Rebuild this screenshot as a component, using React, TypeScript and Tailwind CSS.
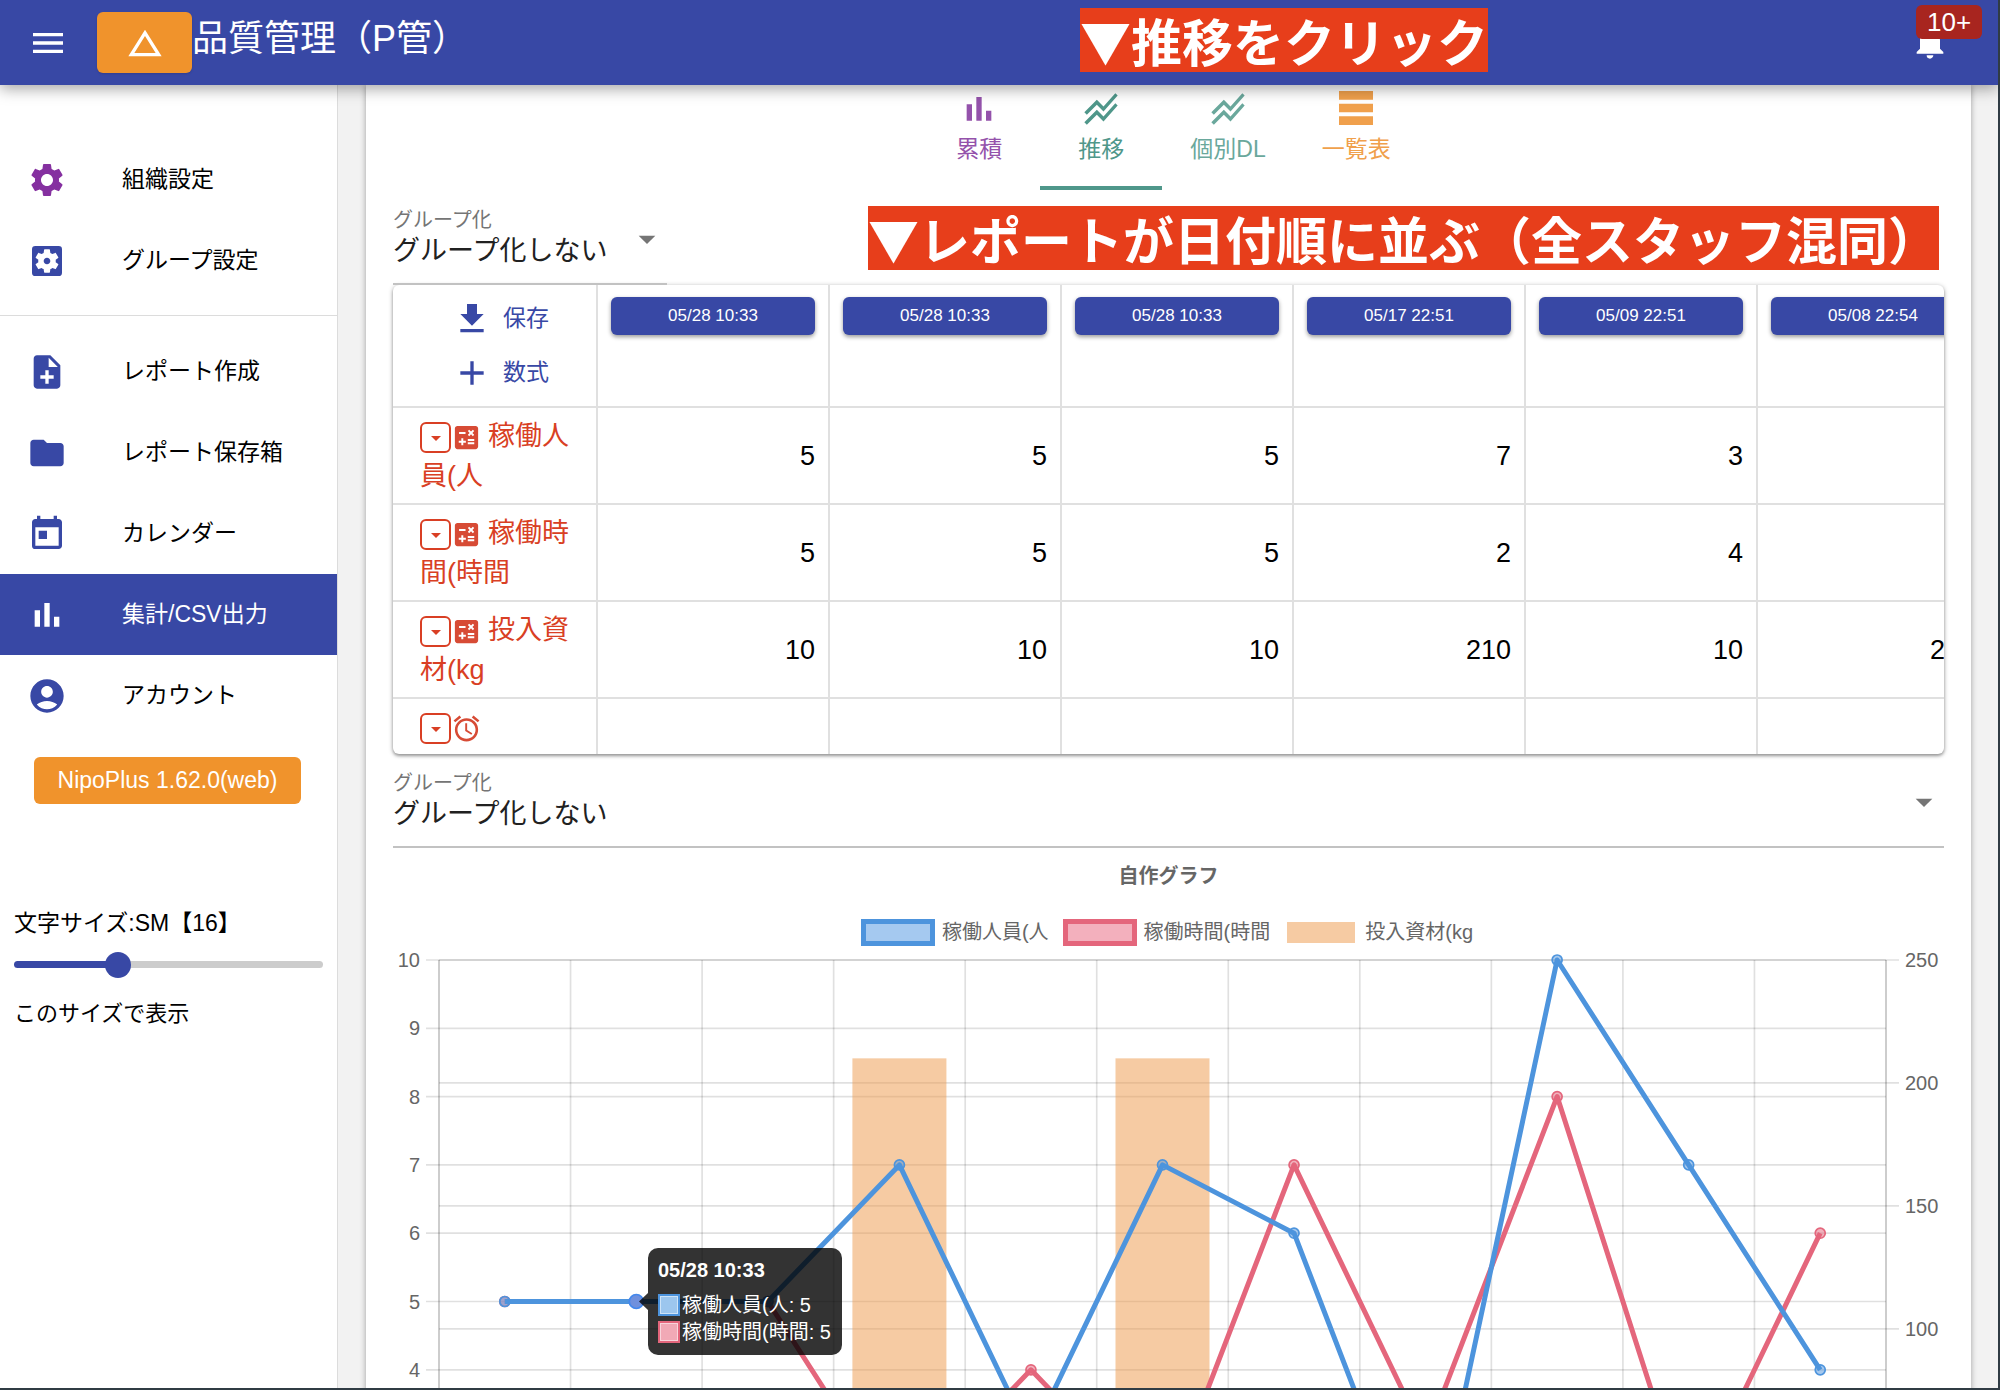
import { useState } from 'react';
import type { ComponentType } from 'react';
import {
  MdAccountCircle,
  MdAdd,
  MdAlarm,
  MdArrowDropDown,
  MdCalculate,
  MdChangeHistory,
  MdFolder,
  MdGetApp,
  MdMenu,
  MdNoteAdd,
  MdNotifications,
  MdSettings,
  MdSettingsApplications,
  MdStackedLineChart,
  MdToday,
} from 'react-icons/md';

type IconProps = { className?: string };
type NavItem = { label: string; icon: ComponentType<IconProps>; color?: string; active?: boolean };

function BarsIcon({ className }: IconProps) {
  return (
    <svg viewBox="0 0 24 24" fill="currentColor" className={className}>
      <path d="M4.600 9.200h3.200V19H4.600zM10.400 4.800h3.200V19h-3.200zM16.200 13h3.200v6h-3.200z" />
    </svg>
  );
}

function RowsIcon({ className }: IconProps) {
  return (
    <svg viewBox="0 0 24 24" fill="currentColor" className={className}>
      <path d="M1.800 1.200h20.400v5.200H1.800zM1.800 8.800h20.400V14H1.800zM1.800 16.400h20.400v5.200H1.800z" />
    </svg>
  );
}

const settingsNav: NavItem[] = [
  { label: '組織設定', icon: MdSettings, color: 'text-[#8530a0]' },
  { label: 'グループ設定', icon: MdSettingsApplications },
];

const reportNav: NavItem[] = [
  { label: 'レポート作成', icon: MdNoteAdd },
  { label: 'レポート保存箱', icon: MdFolder },
  { label: 'カレンダー', icon: MdToday },
  { label: '集計/CSV出力', icon: BarsIcon, active: true },
  { label: 'アカウント', icon: MdAccountCircle },
];

const tabs = [
  { label: '累積', icon: BarsIcon, color: 'text-[#9452ab]' },
  { label: '推移', icon: MdStackedLineChart, color: 'text-[#4f978a]', active: true },
  { label: '個別DL', icon: MdStackedLineChart, color: 'text-[#6aa89c]' },
  { label: '一覧表', icon: RowsIcon, color: 'text-[#f0a04c]' },
];

const dates = ['05/28 10:33', '05/28 10:33', '05/28 10:33', '05/17 22:51', '05/09 22:51', '05/08 22:54'];

const rows = [
  { label: '稼働人員(人', icon: MdCalculate, values: [5, 5, 5, 7, 3, 7] },
  { label: '稼働時間(時間', icon: MdCalculate, values: [5, 5, 5, 2, 4, 2] },
  { label: '投入資材(kg', icon: MdCalculate, values: [10, 10, 10, 210, 10, 210] },
  { label: '', icon: MdAlarm, values: ['', '', '', '', '', ''] },
];

const people = [5, 5, 5, 7, 3, 7, 6, 1, 10, 7, 4];
const hours = [5, 5, 5, 2, 4, 2, 7, 3, 8, 2, 6];
const material = [10, 10, 10, 210, 10, 210, 10, 10, 10, 10, 10];

function NavLink({ item }: { item: NavItem }) {
  const Icon = item.icon;
  return (
    <a
      href="#"
      className={`flex h-[81px] items-center gap-[55px] pl-[27px] text-[23px] ${
        item.active ? 'bg-[#3848a5] text-white' : 'text-black'
      }`}
    >
      <Icon className={`size-10 shrink-0 ${item.active ? 'text-white' : item.color ?? 'text-[#3848a5]'}`} />
      {item.label}
    </a>
  );
}

function GroupSelect({ id, className }: { id: string; className: string }) {
  return (
    <div className={`relative h-[94px] shrink-0 border-b-2 border-[#c2c2c2] pt-4 ${className}`}>
      <label htmlFor={id} className="block text-[20px] leading-[26px] text-[#757575]">
        グループ化
      </label>
      <select id={id} className="block h-9 w-full appearance-none bg-transparent text-[27px] leading-9 text-[#212121]">
        <option>グループ化しない</option>
      </select>
      <MdArrowDropDown className="pointer-events-none absolute right-0 top-7 size-10 text-[#757575]" />
    </div>
  );
}

function Note({ text, className }: { text: string; className: string }) {
  return (
    <p
      className={`whitespace-nowrap bg-[#e73e1b] font-['Noto_Sans_CJK_JP',sans-serif] text-[51px] font-bold leading-[64px] text-white ${className}`}
    >
      {text}
    </p>
  );
}

function Header() {
  return (
    <header className="relative z-10 flex h-[85px] shrink-0 items-center bg-[#3848a5] pl-7 text-white shadow-[0_4px_14px_rgba(0,0,0,0.35)]">
      <button type="button" aria-label="メニュー">
        <MdMenu className="size-10" />
      </button>
      <button
        type="button"
        aria-label="レポート"
        className="ml-[29px] flex h-[61px] w-[95px] items-center justify-center rounded-md bg-[#f0932c] shadow"
      >
        <MdChangeHistory className="size-10" />
      </button>
      <h1 className="pb-2 text-[36px]">品質管理（P管）</h1>
      <Note text="▼推移をクリック" className="absolute right-[510px] top-2" />
      <button type="button" aria-label="通知" className="absolute right-12 top-[22px]">
        <MdNotifications className="size-10" />
        <span className="absolute -top-[17px] left-[6px] rounded-md bg-[#a8251f] px-[11px] text-[26px] leading-[34px]">
          10+
        </span>
      </button>
    </header>
  );
}

function Sidebar() {
  const [size, setSize] = useState(32);
  return (
    <aside className="w-[338px] shrink-0 border-r border-[#dcdcdc] bg-white pt-[54px]">
      <nav>
        {settingsNav.map((item) => (
          <NavLink key={item.label} item={item} />
        ))}
        <hr className="mb-[15px] mt-[14px] border-[#dcdcdc]" />
        {reportNav.map((item) => (
          <NavLink key={item.label} item={item} />
        ))}
      </nav>
      <button type="button" className="ml-[34px] mt-[21px] h-[47px] w-[267px] rounded-md bg-[#f0932c] text-[23px] text-white">
        NipoPlus 1.62.0(web)
      </button>
      <div className="mt-[103px] px-[14px]">
        <label htmlFor="font-size" className="block text-[23px] leading-8">
          文字サイズ:SM【16】
        </label>
        <input
          id="font-size"
          type="range"
          min={0}
          max={100}
          value={size}
          onChange={(e) => setSize(Number(e.target.value))}
          className="mt-[22px] block h-[7px] w-full appearance-none rounded-full bg-linear-to-r from-[#3848a5] from-33% to-[#cccccc] to-33% [&::-webkit-slider-thumb]:size-[26px] [&::-webkit-slider-thumb]:appearance-none [&::-webkit-slider-thumb]:rounded-full [&::-webkit-slider-thumb]:bg-[#3848a5]"
        />
        <p className="mt-[30px] text-[22px] leading-8">このサイズで表示</p>
      </div>
    </aside>
  );
}

function ReportTable() {
  return (
    <div className="overflow-hidden rounded-md shadow-[0_1px_5px_rgba(0,0,0,0.3),0_2px_3px_rgba(0,0,0,0.25)]">
      <table className="w-[1596px] table-fixed border-separate border-spacing-0 text-[27px]">
        <thead>
          <tr className="h-[123px]">
            <th className="w-[205px] border-b-2 border-r-2 border-[#e0e0e0] font-normal">
              <div className="flex flex-col items-center pl-3 text-[23px] text-[#3848a5]">
                <button type="button" className="flex h-[54px] items-center gap-[11px]">
                  <MdGetApp className="size-10" />
                  保存
                </button>
                <button type="button" className="flex h-[54px] items-center gap-[11px]">
                  <MdAdd className="size-10" />
                  数式
                </button>
              </div>
            </th>
            {dates.map((date, i) => (
              <th key={i} className="w-[232px] border-b-2 border-r-2 border-[#e0e0e0] px-[13px] pt-3 align-top">
                <button
                  type="button"
                  className="block h-[38px] w-full rounded-md bg-[#3848a5] text-[17px] font-medium text-white shadow-[0_2px_4px_rgba(0,0,0,0.4)]"
                >
                  {date}
                </button>
              </th>
            ))}
          </tr>
        </thead>
        <tbody>
          {rows.map((row, r) => {
            const Icon = row.icon;
            const line = r < rows.length - 1 ? 'border-b-2' : '';
            return (
              <tr key={r}>
                <th
                  className={`${line} border-r-2 border-[#e0e0e0] pb-[7px] pl-[27px] pr-[22px] pt-2 text-left font-normal leading-10 text-[#d93f24]`}
                >
                  <button
                    type="button"
                    aria-label="並べ替え"
                    className="inline-flex size-[31px] items-center justify-center rounded-md border-2 border-[#d93f24] align-middle"
                  >
                    <MdArrowDropDown className="size-6 shrink-0" />
                  </button>
                  <Icon className="mr-[6px] inline size-[31px] align-middle text-[#d74b35]" />
                  {row.label}
                </th>
                {row.values.map((value, i) => (
                  <td key={i} className={`${line} border-r-2 border-[#e0e0e0] pr-[13px] pt-[2px] text-right text-black`}>
                    {value}
                  </td>
                ))}
              </tr>
            );
          })}
        </tbody>
      </table>
    </div>
  );
}

const legend = [
  { label: '稼働人員(人', box: 'bg-[#a5c9f0] outline-[5px] outline-[#4d94dd] -outline-offset-2' },
  { label: '稼働時間(時間', box: 'bg-[#f3b0bd] outline-[5px] outline-[#e4667c] -outline-offset-2' },
  { label: '投入資材(kg', box: 'bg-[#f6cba3]' },
];

const LEFT = 46;
const RIGHT = 1493;
const TOP = 12;
const STEP = (RIGHT - LEFT) / 11;
const UNIT = 68.3;

const px = (i: number) => LEFT + STEP * (i + 0.5);
const py = (v: number) => TOP + (10 - v) * UNIT;
const pyRight = (v: number) => TOP + ((250 - v) / 250) * UNIT * 9;
const toPoints = (values: number[]) => values.map((v, i) => `${px(i)},${py(v)}`).join(' ');

function Chart() {
  return (
    <svg viewBox="0 0 1551 640" className="block w-full text-[20px]" role="img" aria-label="自作グラフ">
      {/* grid */}
      <g stroke="#000" strokeOpacity="0.12" strokeWidth="1.7">
        {[10, 9, 8, 7, 6, 5, 4, 3, 2, 1].map((v) => (
          <line key={v} x1={LEFT - 13} x2={RIGHT} y1={py(v)} y2={py(v)} />
        ))}
        {[250, 200, 150, 100, 50, 0].map((v) => (
          <line key={v} x1={LEFT} x2={RIGHT + 13} y1={pyRight(v)} y2={pyRight(v)} />
        ))}
        {Array.from({ length: 12 }, (_, i) => (
          <line key={i} x1={LEFT + STEP * i} x2={LEFT + STEP * i} y1={TOP} y2={py(1)} />
        ))}
        <line x1={LEFT} x2={LEFT} y1={TOP} y2={py(1)} />
        <line x1={RIGHT} x2={RIGHT} y1={TOP} y2={py(1)} />
      </g>

      {/* axis labels */}
      <g fill="#666">
        {[10, 9, 8, 7, 6, 5, 4, 3, 2, 1].map((v) => (
          <text key={v} x={LEFT - 19} y={py(v) + 7} textAnchor="end">
            {v}
          </text>
        ))}
        {[250, 200, 150, 100, 50, 0].map((v) => (
          <text key={v} x={RIGHT + 19} y={pyRight(v) + 7}>
            {v}
          </text>
        ))}
      </g>

      {material.map((v, i) => (
        <rect key={i} x={px(i) - 47} y={pyRight(v)} width="94" height={pyRight(0) - pyRight(v)} fill="#ee9848" fillOpacity="0.5" />
      ))}

      <polyline points={toPoints(hours)} fill="none" stroke="#e4667c" strokeWidth="5" strokeLinejoin="round" />
      {hours.map((v, i) => (
        <circle key={i} cx={px(i)} cy={py(v)} r="5" fill="#e4667c" fillOpacity="0.5" stroke="#e4667c" strokeWidth="1.7" />
      ))}
      <polyline points={toPoints(people)} fill="none" stroke="#4d94dd" strokeWidth="5" strokeLinejoin="round" />
      {people.map((v, i) => (
        <circle
          key={i}
          cx={px(i)}
          cy={py(v)}
          r={i === 1 ? 7 : 5}
          fill={i === 1 ? '#6f90dd' : '#4d94dd'}
          fillOpacity={i === 1 ? 1 : 0.5}
          stroke={i === 1 ? '#4488ec' : '#4d94dd'}
          strokeWidth="1.7"
        />
      ))}

      {/* tooltip */}
      <g fill="#fff">
        <path
          d="M265 300H439a10 10 0 0 1 10 10V397a10 10 0 0 1-10 10H265a10 10 0 0 1-10-10V362L246 353.500L255 345V310a10 10 0 0 1 10-10Z"
          fill="#000"
          fillOpacity="0.8"
        />
        <text x="265" y="329" fontWeight="bold">
          05/28 10:33
        </text>
        <rect x="266" y="347" width="20" height="20" fill="#9cc6ee" stroke="#4d94dd" strokeWidth="2" />
        <rect x="267.500" y="348.500" width="17" height="17" fill="none" stroke="#fff" strokeOpacity="0.5" />
        <text x="289" y="364">稼働人員(人: 5</text>
        <rect x="266" y="374" width="20" height="20" fill="#f1a9b6" stroke="#e4667c" strokeWidth="2" />
        <rect x="267.500" y="375.500" width="17" height="17" fill="none" stroke="#fff" strokeOpacity="0.5" />
        <text x="289" y="391">稼働時間(時間: 5</text>
      </g>
    </svg>
  );
}

export default function App() {
  return (
    <div className="flex h-screen flex-col overflow-hidden border-b-2 border-r-2 border-[#303c44] bg-white font-['Liberation_Sans','Noto_Sans_CJK_JP',sans-serif] text-black">
      <Header />
      <div className="flex min-h-0 flex-1">
        <Sidebar />
        <div className="min-w-0 flex-1 overflow-hidden bg-[#f2f2f2] pl-7 pr-[27px]">
          <main className="min-h-full bg-white px-[27px] shadow-[0_0_6px_rgba(0,0,0,0.35)]">
            <div className="flex h-[105px] justify-center" role="tablist">
              {tabs.map((tab) => {
                const Icon = tab.icon;
                return (
                  <button
                    key={tab.label}
                    type="button"
                    role="tab"
                    aria-selected={!!tab.active}
                    className={`flex min-w-[122px] flex-col items-center border-b-4 px-7 pt-1 text-[23px] leading-10 ${tab.color} ${
                      tab.active ? 'border-[#4f978a]' : 'border-transparent'
                    }`}
                  >
                    <Icon className="size-10" />
                    {tab.label}
                  </button>
                );
              })}
            </div>

            <div className="flex items-start justify-between pt-px">
              <GroupSelect id="group-table" className="w-[274px]" />
              <Note text="▼レポートが日付順に並ぶ（全スタッフ混同）" className="mr-[5px] mt-[15px]" />
            </div>

            <ReportTable />

            <GroupSelect id="group-chart" className="w-full" />

            <section>
              <h2 className="mt-3 text-center text-[20px] font-bold leading-8 text-[#666]">自作グラフ</h2>
              <ul className="mt-6 flex h-8 items-center justify-center gap-[17px] text-[20px] text-[#666]">
                {legend.map((item) => (
                  <li key={item.label} className="flex items-center gap-[10px]">
                    <span className={`h-[21px] w-[68px] ${item.box}`} />
                    {item.label}
                  </li>
                ))}
              </ul>
              <Chart />
            </section>
          </main>
        </div>
      </div>
    </div>
  );
}
